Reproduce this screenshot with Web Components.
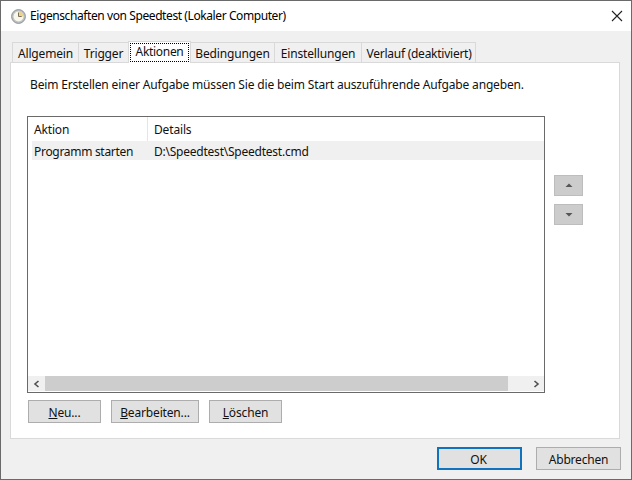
<!DOCTYPE html>
<html><head><meta charset="utf-8"><style>
html,body{margin:0;padding:0;width:632px;height:480px;overflow:hidden;background:#f0f0f0}
body{font:12px/16px "Noto Sans","Open Sans",sans-serif;color:#111;letter-spacing:-.16px}
</style></head><body>
<prop-dialog>
  <title-bar slot="title">Eigenschaften von Speedtest (Lokaler Computer)</title-bar>
  <tab-strip slot="tabs">
    <tab-item w="67">Allgemein</tab-item><tab-item w="51">Trigger</tab-item><tab-item w="63" active style="letter-spacing:-.3px">Aktionen</tab-item><tab-item w="85">Bedingungen</tab-item><tab-item w="88">Einstellungen</tab-item><tab-item w="115" style="letter-spacing:-.25px;padding-left:1px">Verlauf (deaktiviert)</tab-item>
  </tab-strip>
  <actions-panel slot="panel"></actions-panel>
  <win-button slot="foot" default w="85" style="padding-right:2px">OK</win-button>
  <win-button slot="foot" w="85" style="letter-spacing:-.22px">Abbrechen</win-button>
</prop-dialog>
<script>
function def(name,css,html,init){
  customElements.define(name,class extends HTMLElement{
    connectedCallback(){
      if(this.shadowRoot)return;
      const r=this.attachShadow({mode:'open'});
      r.innerHTML='<style>'+css+'</style>'+html;
      if(init)init(this,r);
    }
  });
}
def('prop-dialog',`
:host{display:flex;flex-direction:column;box-sizing:border-box;width:632px;height:480px;border:1px solid #6a6a6a;background:#f0f0f0}
.tabs{padding:10px 0 0 12px;height:31px;box-sizing:border-box;display:flex;align-items:flex-end}
.panel{margin:0 0 0 9px}
.foot{display:flex;justify-content:flex-end;gap:14px;padding:8px 10px 0 0}
`,`<slot name="title"></slot><div class="tabs"><slot name="tabs"></slot></div><div class="panel"><slot name="panel"></slot></div><div class="foot"><slot name="foot"></slot></div>`);
def('title-bar',`
:host{display:flex;align-items:center;height:30px;background:#fff;color:#000;padding-left:10px;gap:4px;position:relative;box-sizing:border-box;letter-spacing:-.41px}
svg{display:block;flex:none}
.x{position:absolute;right:8px;top:9px}
`,`<svg width="15" height="15" viewBox="0 0 15 15"><circle cx="7.5" cy="7.5" r="6.9" fill="#bcc1c6" stroke="#8f949a"/><circle cx="7.5" cy="7.5" r="5" fill="#f9f6ea"/><path d="M7.5 2.5A5 5 0 0 1 12.5 7.5H7.5z" fill="#ecd28c"/><path d="M7.5 3.5v4h3.2" fill="none" stroke="#77705c"/></svg><span><slot></slot></span><svg class="x" width="12" height="12" viewBox="0 0 12 12"><path d="M1 1l10 10M11 1L1 11" stroke="#222" stroke-width="1.1" fill="none"/></svg>`);
def('tab-strip',`:host{display:flex;align-items:flex-end;height:21px}`,`<slot></slot>`);
def('tab-item',`
:host{display:block;box-sizing:border-box;height:20px;padding-top:3px;text-align:center;background:#f0f0f0;border:1px solid #d9d9d9;border-bottom:0;margin-left:-1px;white-space:nowrap;color:#111}
:host([active]){height:22px;background:#fff;padding:2px 2px 0;margin-bottom:-1px;position:relative;z-index:2}
.f{display:block;height:16px}
:host([active]) .f{outline:1px dotted #000;outline-offset:0;height:17px;line-height:16px}
`,`<span class="f"><slot></slot></span>`,(h)=>{h.style.width=h.getAttribute('w')+'px'});
def('actions-panel',`
:host{display:block;box-sizing:border-box;height:377px;width:610px;background:#fff;border:1px solid #d9d9d9;padding:14px 16px 0 16px}
p{margin:0 0 0 3px;height:17px}
.mid{display:flex;margin-top:22px}
.list{box-sizing:border-box;width:518px;height:277px;border:1px solid #6a6a6a;display:flex;flex-direction:column}
.head,.row{display:flex;align-items:center;box-sizing:border-box}
.head{height:24px}
.row{height:19px;background:#f0f0f0;margin-left:4px}
.c1{width:120px;padding-left:6px;box-sizing:border-box;height:100%;display:flex;align-items:center;border-right:1px solid #e5e5e5}
.c1 span,.c2 span{position:relative;display:block;margin-top:2px}
.row .c1{width:116px;padding-left:2px;border:0;letter-spacing:-.3px}
.c2{padding-left:6px;height:100%;display:flex;align-items:center}
.row .c2{letter-spacing:-.23px}
.sp{flex:1}
.sb{display:flex;height:15px;background:#f0f0f0;align-items:stretch;margin-bottom:1px}
.sb span{width:17px;display:flex;align-items:center;justify-content:center;flex:none}
.thumb{flex:1;background:#cdcdcd;margin-right:19px}
.ud{display:flex;flex-direction:column;gap:8px;margin:59px 0 0 9px}
.ud button{all:unset;display:flex;box-sizing:border-box;width:29px;height:21px;background:#ccc;border:1px solid #bdbdbd;align-items:center;justify-content:center}
.btns{display:flex;gap:10px;margin:7px 0 0 1px}
`,`<p>Beim Erstellen einer Aufgabe müssen Sie die beim Start auszuführende Aufgabe angeben.</p>
<div class="mid"><div class="list">
<div class="head"><div class="c1"><span>Aktion</span></div><div class="c2"><span>Details</span></div></div>
<div class="row"><div class="c1"><span>Programm starten</span></div><div class="c2"><span>D:\\Speedtest\\Speedtest.cmd</span></div></div>
<div class="sp"></div>
<div class="sb"><span><svg width="8" height="8" viewBox="0 0 8 8"><path d="M5.5 1L2 4l3.5 3" fill="none" stroke="#505050" stroke-width="1.6"/></svg></span><div class="thumb"></div><span><svg width="8" height="8" viewBox="0 0 8 8"><path d="M2.5 1L6 4L2.5 7" fill="none" stroke="#505050" stroke-width="1.6"/></svg></span></div>
</div>
<div class="ud"><button aria-label="up"><svg width="8" height="5" viewBox="0 0 8 5"><path d="M0.5 4h7L4 .5z" fill="#555"/></svg></button><button aria-label="down"><svg width="8" height="5" viewBox="0 0 8 5"><path d="M.5 1h7L4 4.5z" fill="#555"/></svg></button></div></div>
<div class="btns"><win-button w="73"><u>N</u>eu...</win-button><win-button w="88"><u>B</u>earbeiten...</win-button><win-button w="73"><u>L</u>öschen</win-button></div>`);
def('win-button',`
:host{display:flex;box-sizing:border-box;height:23px;padding-top:2px;background:#e1e1e1;border:1px solid #adadad;align-items:center;justify-content:center;white-space:nowrap}
:host([default]){border:2px solid #0f73bd}
`,`<slot></slot>`,(h)=>{h.style.width=h.getAttribute('w')+'px'});
</script>
</body></html>
